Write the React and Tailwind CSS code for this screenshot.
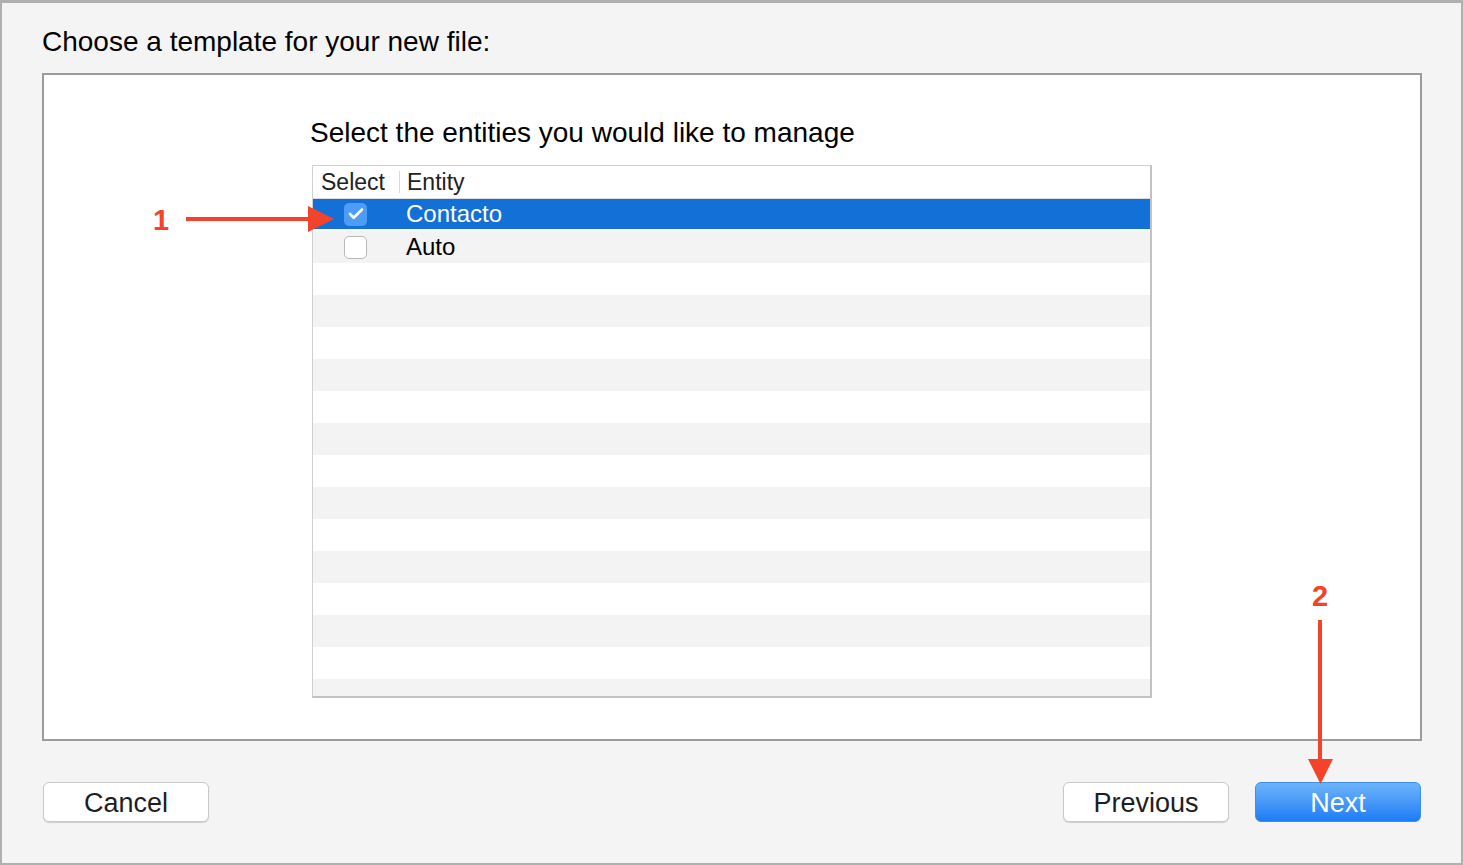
import { Check } from "lucide-react";

const font = { fontFamily: '"Liberation Sans", Arial, sans-serif' };

function Checkbox({ checked }) {
  return checked ? (
    <div className="w-[23px] h-[23px] rounded-[5px] bg-[#4d9df6] flex items-center justify-center">
      <Check size={18} strokeWidth={3.5} className="text-white" />
    </div>
  ) : (
    <div className="w-[23px] h-[23px] rounded-[5px] bg-white border border-[#b8b8b8]" />
  );
}

export default function App() {
  const entities = [
    { name: "Contacto", checked: true },
    { name: "Auto", checked: false },
  ];
  const filler = Array.from({ length: 14 });

  return (
    <div
      className="relative w-[1463px] h-[865px] bg-[#f4f4f4] border-t-[3px] border-l-2 border-r-2 border-b-2 border-[#b0b0b0] overflow-hidden"
      style={font}
    >
      {/* HEADER */}
      <div className="pl-[40px] pt-[23px] h-[70px] text-[28px] leading-[32px] text-black">
        Choose a template for your new file:
      </div>

      {/* CONTENT BOX */}
      <div className="ml-[40px] w-[1380px] h-[668px] bg-white border-2 border-[#9b9b9b] pl-[266px] pt-[41px]">
        <div className="text-[28px] leading-[34px] text-black mb-[15px]">
          Select the entities you would like to manage
        </div>

        {/* TABLE */}
        <div className="ml-[2px] w-[840px] h-[533px] border border-[#d0d0d0] border-r-2 border-b-2 border-r-[#c2c2c2] border-b-[#c2c2c2] overflow-hidden bg-white">
          <div className="flex items-center h-[33px] border-b border-[#dcdcdc] text-[23px] text-[#222]">
            <div className="pl-[8px] w-[86px]">Select</div>
            <div className="w-px h-[22px] bg-[#d8d8d8]" />
            <div className="pl-[7px]">Entity</div>
          </div>

          {entities.map((e, i) => (
            <div
              key={e.name}
              className={`flex items-center h-[32px] text-[24px] ${
                e.checked
                  ? "bg-[#1270d6] text-white border-b-2 border-white"
                  : i % 2 === 1
                  ? "bg-[#f3f3f3] text-black"
                  : "bg-white text-black"
              }`}
            >
              <div className="w-[93px] pl-[31px]">
                <Checkbox checked={e.checked} />
              </div>
              <div>{e.name}</div>
            </div>
          ))}

          {filler.map((_, i) => (
            <div
              key={i}
              className={`h-[32px] ${i % 2 === 1 ? "bg-[#f3f3f3]" : "bg-white"}`}
            />
          ))}
        </div>
      </div>

      {/* BUTTONS */}
      <div className="flex items-center pl-[41px] pr-[40px] mt-[41px]">
        <button className="w-[166px] h-[40px] rounded-[6px] bg-white border border-[#c9c9c9] shadow-[0_1px_1px_rgba(0,0,0,0.15)] text-[27px] text-[#1e1e1e]">
          Cancel
        </button>
        <div className="flex-1" />
        <button className="w-[166px] h-[40px] rounded-[6px] bg-white border border-[#c9c9c9] shadow-[0_1px_1px_rgba(0,0,0,0.15)] text-[27px] text-[#1e1e1e]">
          Previous
        </button>
        <button className="ml-[26px] w-[166px] h-[40px] rounded-[6px] bg-gradient-to-b from-[#6cb3fa] to-[#1a7cf5] border border-[#3d8ef0] text-[27px] text-white">
          Next
        </button>
      </div>

      {/* ANNOTATION 1 */}
      <div className="absolute left-[151px] top-[200px] text-[29px] font-bold text-[#f4432b] leading-[34px]">
        1
      </div>
      <div className="absolute left-[184px] top-[214px] w-[126px] h-[4px] bg-[#f4432b]" />
      <svg className="absolute left-[306px] top-[203px]" width="26" height="26" viewBox="0 0 26 26">
        <polygon points="0,0 26,13 0,26" fill="#f4432b" />
      </svg>

      {/* ANNOTATION 2 */}
      <div className="absolute left-[1310px] top-[576px] text-[29px] font-bold text-[#f4432b] leading-[34px]">
        2
      </div>
      <div className="absolute left-[1316px] top-[617px] w-[4px] h-[143px] bg-[#f4432b]" />
      <svg className="absolute left-[1306px] top-[756px]" width="25" height="25" viewBox="0 0 25 25">
        <polygon points="0,0 25,0 12.5,25" fill="#f4432b" />
      </svg>
    </div>
  );
}
